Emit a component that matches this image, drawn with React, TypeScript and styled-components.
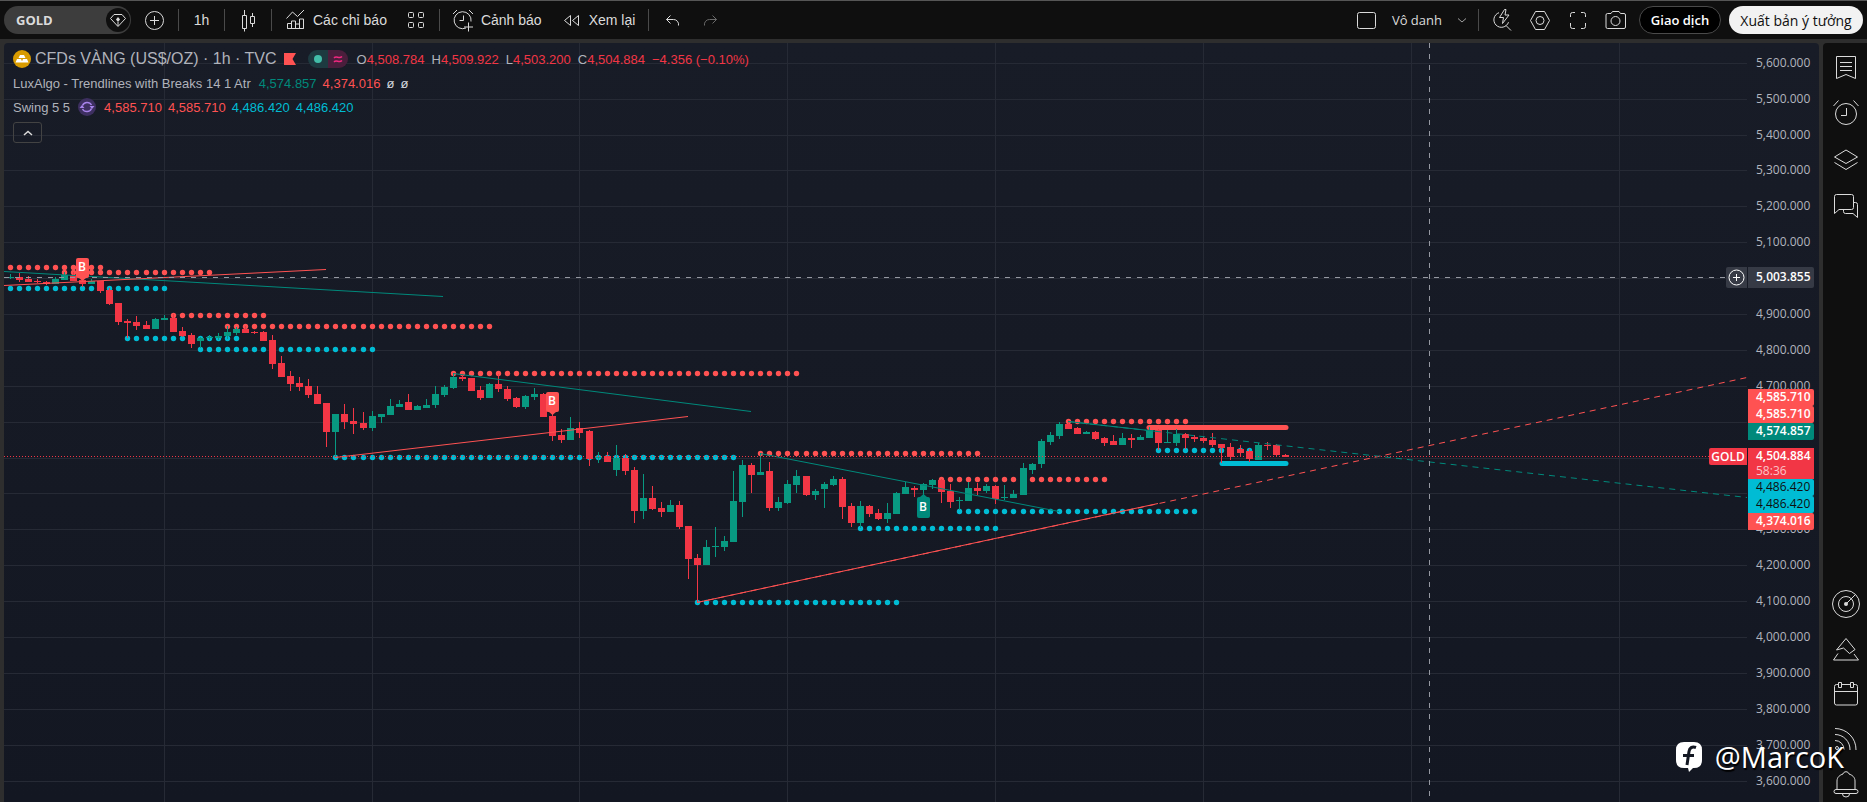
import React from 'react';
import styled, { createGlobalStyle, css } from 'styled-components';

const C = {
  bar: '#0f0f0f',
  frame: '#2e2e2e',
  up: '#089981',
  down: '#f23645',
  high: '#ff5252',
  low: '#00bcd4',
  teal: '#00897b',
  text: '#dbdbdb',
};

const GlobalStyle = createGlobalStyle`
  * { box-sizing: border-box; }
  html, body, #root { height: 100%; }
  body { margin: 0; background: ${C.frame}; overflow: hidden; }
  button { font: inherit; color: inherit; background: none; border: 0; padding: 0; cursor: pointer; }
`;

/* ---------- page frame ---------- */

const Page = styled.div`
  position: relative;
  display: flex;
  flex-direction: column;
  height: 100vh;
  overflow: hidden;
  background: ${C.frame};
  color: ${C.text};
  font-family: 'Liberation Sans', Arial, sans-serif;
  font-size: 14px;
`;

const Toolbar = styled.header`
  display: flex;
  justify-content: space-between;
  flex: none;
  height: 39px;
  padding: 0 4px;
  border-top: 1px solid #565656;
  background: ${C.bar};
`;

const Group = styled.div`
  display: flex;
  align-items: center;
`;

const Cluster = styled.div<{ $gap: number }>`
  display: flex;
  align-items: center;
  gap: ${p => p.$gap}px;
`;

const Separator = styled.span`
  width: 1px;
  height: 22px;
  margin: 0 9px;
  background: #4a4a4a;
`;

const SymbolButton = styled.button`
  display: flex;
  align-items: center;
  justify-content: space-between;
  width: 127px;
  height: 28px;
  margin-right: 10px;
  padding: 0 1px 0 12px;
  border-radius: 14px;
  background: #3d3d3d;
  font: 700 13px 'Open Sans', sans-serif;
`;

const SymbolBadge = styled.span`
  display: flex;
  align-items: center;
  justify-content: center;
  width: 24px;
  height: 24px;
  border-radius: 50%;
  background: ${C.bar};
`;

const IconButton = styled.button<{ $dim?: boolean }>`
  display: flex;
  align-items: center;
  justify-content: center;
  width: 28px;
  height: 28px;
  color: ${p => (p.$dim ? '#6a6a6a' : C.text)};
`;

const IntervalButton = styled.button`
  width: 27px;
  height: 28px;
`;

const LabelButton = styled.button`
  display: flex;
  align-items: center;
  gap: 4px;
  height: 28px;
  padding-right: 4px;
  white-space: nowrap;
`;

const LayoutButton = styled.button`
  display: flex;
  align-items: center;
  gap: 13px;
  height: 28px;
  font: 400 13px 'Open Sans', sans-serif;
`;

const PillButton = styled.button<{ $light?: boolean }>`
  height: 28px;
  border-radius: 14px;
  white-space: nowrap;
  ${p =>
    p.$light
      ? css`
          width: 134px;
          margin-left: 8px;
          background: #f2f2f2;
          color: #0f0f0f;
          font: 400 14px 'Open Sans', sans-serif;
        `
      : css`
          width: 82px;
          margin-left: 9px;
          border: 1px solid #4a4a4a;
          background: #000;
          color: #fff;
          font: 600 13px 'Open Sans', sans-serif;
        `}
`;

const Workspace = styled.div`
  display: flex;
  flex: 1;
  gap: 4px;
  min-height: 0;
  padding: 4px 0 0 4px;
`;

const ChartPanel = styled.main`
  position: relative;
  display: flex;
  flex: 1;
  min-width: 0;
  overflow: hidden;
  border-radius: 4px 4px 0 0;
  background: linear-gradient(#181c27, #131722);
`;

const Plot = styled.svg`
  flex: 1;
  min-width: 0;
  height: 100%;
  font-family: 'Open Sans', sans-serif;
`;

const PriceAxis = styled.aside`
  position: relative;
  flex: none;
  width: 72px;
  font: 400 12px 'Open Sans', sans-serif;
`;

const AxisScale = styled.svg`
  display: block;
  width: 100%;
  height: 100%;
`;

const SideBar = styled.nav`
  display: flex;
  flex-direction: column;
  justify-content: space-between;
  flex: none;
  width: 44px;
  padding: 7px 0 0 2px;
  border-radius: 4px 0 0 0;
  background: ${C.bar};
`;

const SideGroup = styled.div<{ $gap: number }>`
  display: flex;
  flex-direction: column;
  align-items: center;
  gap: ${p => p.$gap}px;
`;

const SideButton = styled.button`
  display: flex;
  align-items: center;
  justify-content: center;
  width: 40px;
  height: 36px;
`;

/* ---------- legend ---------- */

const Legend = styled.section`
  position: absolute;
  top: 4px;
  left: 9px;
  color: #b0b3bb;
  font-size: 13px;
  white-space: nowrap;
`;

const LegendRow = styled.div`
  display: flex;
  align-items: center;
  height: 24px;
`;

const Title = styled.h1`
  margin: 0 7px 0 4px;
  font-size: 16px;
  font-weight: 400;
`;

const StatusPill = styled.span`
  display: flex;
  width: 40px;
  height: 18px;
  margin: 0 9px 0 12px;
  overflow: hidden;
  border-radius: 9px;
`;

const StatusHalf = styled.span<{ $bg: string }>`
  display: flex;
  flex: 1;
  align-items: center;
  justify-content: center;
  background: ${p => p.$bg};
`;

const Values = styled.span<{ $gap: number; $before: number }>`
  display: flex;
  align-items: center;
  gap: ${p => p.$gap}px;
  margin-left: ${p => p.$before}px;
`;

const Value = styled.span<{ $color: string }>`
  color: ${p => p.$color};
`;

const StudyBadge = styled.span`
  display: flex;
  margin-left: 8px;
`;

const CollapseButton = styled.button`
  display: flex;
  align-items: center;
  justify-content: center;
  width: 29px;
  height: 21px;
  margin-top: 3px;
  border: 1px solid #434343;
  border-radius: 3px;
  color: ${C.text};
`;

/* ---------- axis tags ---------- */

const TagStack = styled.div<{ $top: number }>`
  position: absolute;
  top: ${p => p.$top}px;
  left: 1px;
  width: 66px;
`;

const Tag = styled.div<{ $bg: string; $ink?: string; $tall?: boolean }>`
  height: ${p => (p.$tall ? 21 : 17)}px;
  padding-left: 8px;
  border-radius: 0 2px 2px 0;
  background: ${p => p.$bg};
  color: ${p => p.$ink || '#fff'};
  font-weight: ${p => (p.$ink ? 400 : 600)};
  line-height: ${p => (p.$tall ? 20 : 16)}px;
`;

const LastPriceTag = styled.div`
  height: 31px;
  padding-left: 8px;
  background: ${C.down};
  color: #fff;
  font-weight: 600;
  line-height: 16px;
`;

const Countdown = styled.div`
  color: #fbc3c8;
  font-weight: 400;
  line-height: 13px;
`;

const SideTag = styled.div<{ $top: number; $width: number; $height: number; $bg: string }>`
  position: absolute;
  top: ${p => p.$top}px;
  right: 72px;
  display: flex;
  align-items: center;
  justify-content: center;
  width: ${p => p.$width}px;
  height: ${p => p.$height}px;
  border-radius: 2px 0 0 2px;
  background: ${p => p.$bg};
  color: #fff;
  font-weight: 600;
`;

const Watermark = styled.div`
  position: absolute;
  right: 23px;
  bottom: 25px;
  display: flex;
  align-items: center;
  gap: 12px;
  color: #fff;
  font: 400 29px/40px 'Open Sans', sans-serif;
  text-shadow: 1px 2px 1px #000;
  pointer-events: none;
`;

/* ---------- icons ---------- */

const Icon = ({ children, size = 28 }: { children: React.ReactNode; size?: number }) => (
  <svg width={size} height={size} viewBox={`0 0 ${size} ${size}`} fill="none" stroke="currentColor" aria-hidden="true">
    {children}
  </svg>
);

const icons = {
  gem: (
    <Icon size={24}>
      <path d="M8 6.5h8l3.5 4-7.500 8-7.500-8 3.500-4z" strokeLinejoin="round" />
      <path d="M12 9l2 2.500-2 2.500-2-2.500z" fill="currentColor" stroke="none" />
      <path d="M12 14v4" />
    </Icon>
  ),
  plus: (
    <Icon>
      <circle cx="13.500" cy="14.500" r="9" />
      <path d="M13.500 10v9M9 14.500h9" />
    </Icon>
  ),
  candles: (
    <Icon>
      <path d="M8.500 9.500h4v13h-4zM10.500 4v5.500M10.500 22.500v3M16.500 10.500h4v7h-4zM18.500 7v3.500M18.500 17.500v3.500" />
    </Icon>
  ),
  indicators: (
    <Icon>
      <path d="M6.500 22.500v-5h4v5zM10.500 22.500v-7.500h4v7.500M14.500 22.500v-4.500h4v4.500M18.500 22.500v-9.500h4v9.500zM6.500 22.500h16" />
      <path d="M5.500 12.500l6-6.500 5 4.500 6.500-6.500" />
    </Icon>
  ),
  templates: (
    <Icon>
      {[6.5, 16.5].flatMap(x => [6.5, 16.5].map(y => <rect key={`${x}-${y}`} x={x} y={y} width="5" height="5" rx="1" />))}
    </Icon>
  ),
  alert: (
    <Icon>
      <path d="M17 22a8.500 8.500 0 1 1 5-6.500" />
      <path d="M14.500 9.500v5h-4M4 8l4-4M24 8l-4-4M19.500 16.500v9M15 21h9" />
    </Icon>
  ),
  replay: (
    <Icon>
      <path d="M13.500 9.500v10l-6-5zM21.500 9.500v10l-6-5z" strokeLinejoin="round" />
    </Icon>
  ),
  undo: (
    <Icon>
      <path d="M12.500 9.500l-4 4 4 4M8.500 13.500h7a5 5 0 0 1 5 6" />
    </Icon>
  ),
  redo: (
    <Icon>
      <path d="M16.500 9.500l4 4-4 4M20.500 13.500h-7a5 5 0 0 0-5 6" />
    </Icon>
  ),
  layout: (
    <Icon>
      <rect x="4.500" y="6.500" width="18" height="16" rx="2" />
    </Icon>
  ),
  chevron: (
    <Icon size={14}>
      <path d="M3 5.500l4 3.500 4-3.500" stroke="#a0a0a0" />
    </Icon>
  ),
  quickSearch: (
    <Icon>
      <path d="M11 6.700a7.500 7.500 0 1 0 9.500 9.500M18 19.500l5 5" />
      <path d="M16.500 3.500l-5 8h4l-1 6 6.500-8.500h-4l1-5.500z" strokeLinejoin="round" />
    </Icon>
  ),
  settings: (
    <Icon>
      <path d="M9.500 5.500h9l5 9-5 9h-9l-5-9z" strokeLinejoin="round" />
      <circle cx="14" cy="14.500" r="4" />
    </Icon>
  ),
  fullscreen: (
    <Icon>
      <path d="M6.500 11V8.500a2 2 0 0 1 2-2H11M17 6.500h2.500a2 2 0 0 1 2 2V11M21.500 17v3.500a2 2 0 0 1-2 2H17M11 22.500H8.500a2 2 0 0 1-2-2V17" />
    </Icon>
  ),
  camera: (
    <Icon>
      <path d="M5.500 7.500H9l1.500-2h6.500l1.500 2h3.500a1.500 1.500 0 0 1 1.500 1.500v12a1.500 1.500 0 0 1-1.500 1.500h-16.500a1.500 1.500 0 0 1-1.500-1.500v-12a1.500 1.500 0 0 1 1.500-1.500z" />
      <circle cx="13.500" cy="15" r="4.500" />
    </Icon>
  ),
  watchlist: (
    <Icon>
      <path d="M4.500 2.500h19v22l-9.500-4-9.500 4zM8 8.500h12M8 12.500h12M8 16.500h12" />
    </Icon>
  ),
  alarms: (
    <Icon>
      <circle cx="14" cy="14" r="10.500" />
      <path d="M14.500 8v7.500H9M1.500 6l5-5.500M26.500 6l-5-5.500" />
    </Icon>
  ),
  layers: (
    <Icon>
      <path d="M14 4l11.500 7L14 17.500 2.500 11zM2.500 16.500L14 23.500l11.500-7" />
    </Icon>
  ),
  chat: (
    <Icon>
      <path d="M4.500 2.500h15a2 2 0 0 1 2 2v11a2 2 0 0 1-2 2H7l-4.500 4v-17a2 2 0 0 1 2-2z" />
      <path d="M21.500 10.500h2a2 2 0 0 1 2 2v13l-4.500-4h-7.500a2 2 0 0 1-2-2v-2" />
    </Icon>
  ),
  radar: (
    <Icon>
      <circle cx="14" cy="14" r="13.500" />
      <circle cx="14" cy="14" r="7.500" />
      <circle cx="14" cy="14" r="2" fill="currentColor" stroke="none" />
      <path d="M14 14l9.500-9.500" />
    </Icon>
  ),
  ideas: (
    <Icon>
      <path d="M14 3.500l9 11-5.500 4-6-5.500-7 2zM6 18.500l-4.500 6.500h25l-4.500-6" strokeLinejoin="round" />
    </Icon>
  ),
  calendar: (
    <Icon>
      <path d="M6 4.500H4.500a2 2 0 0 0-2 2v16.500a2 2 0 0 0 2 2h19a2 2 0 0 0 2-2V6.500a2 2 0 0 0-2-2H22M9.500 4.500h9M2.500 11.500h23M6.500 2.500h3v5h-3zM18.500 2.500h3v5h-3z" />
    </Icon>
  ),
  stream: (
    <Icon>
      <path d="M3 3.500a21 21 0 0 1 21 21.500M3 9.500a15 15 0 0 1 15 15.500M3 15.500a9 9 0 0 1 9 9.500" />
      <circle cx="5" cy="23" r="1.500" />
    </Icon>
  ),
  bell: (
    <Icon>
      <path d="M5 19.500V11c0-4 3-6 6-7 .500-3 5.500-3 6 0 3 1 6 3 6 7v8.500M4 19.500h20a2 2 0 0 1 0 4H4a2 2 0 0 1 0-4zM10.500 24a3.500 3 0 0 0 7 0" />
    </Icon>
  ),
  collapse: (
    <Icon size={14}>
      <path d="M3 9l4-3.500L11 9" strokeWidth="1.500" />
    </Icon>
  ),
};

/* ---------- chart data ---------- */

type Candle = ['u' | 'd', number, number, number, number];

/* direction, wick top, body top, body bottom, wick bottom */
const candles: Candle[] = [
  ['u', 274, 277, 278, 279], ['d', 273, 277, 280, 282], ['d', 276, 279, 282, 282], ['d', 279, 281, 282, 283],
  ['d', 281, 282, 284, 285], ['u', 277, 279, 284, 284], ['u', 272, 275, 280, 280], ['d', 272, 275, 281, 281],
  ['d', 278, 280, 284, 287], ['u', 279, 281, 284, 284], ['d', 281, 281, 291, 293], ['d', 288, 290, 304, 305],
  ['d', 303, 303, 322, 325], ['d', 319, 321, 323, 338], ['d', 316, 322, 326, 330], ['d', 321, 325, 329, 329],
  ['u', 318, 319, 329, 329], ['u', 315, 318, 320, 320], ['d', 314, 318, 332, 332], ['d', 327, 331, 336, 337],
  ['d', 333, 335, 344, 348], ['u', 337, 338, 341, 348], ['u', 335, 337, 338, 340], ['u', 333, 336, 338, 340],
  ['u', 326, 332, 336, 339], ['u', 327, 329, 333, 335], ['d', 326, 329, 333, 333], ['d', 331, 332, 333, 334],
  ['d', 331, 332, 341, 341], ['d', 335, 340, 364, 369], ['d', 356, 363, 377, 377], ['d', 371, 376, 384, 391],
  ['d', 377, 383, 387, 391], ['d', 379, 386, 395, 398], ['d', 386, 394, 404, 404], ['d', 403, 403, 432, 447],
  ['u', 414, 414, 432, 457], ['d', 404, 414, 422, 429], ['d', 408, 421, 424, 434], ['d', 412, 423, 428, 430],
  ['u', 411, 416, 428, 431], ['u', 414, 414, 417, 423], ['u', 399, 406, 415, 415], ['u', 400, 404, 407, 407],
  ['d', 394, 402, 410, 410], ['u', 405, 406, 410, 410], ['u', 399, 405, 408, 408], ['u', 386, 394, 405, 408],
  ['u', 385, 387, 395, 397], ['u', 373, 377, 388, 389], ['d', 374, 377, 379, 381], ['d', 378, 378, 391, 391],
  ['d', 386, 390, 398, 400], ['u', 383, 384, 398, 398], ['d', 374, 384, 389, 392], ['d', 386, 389, 399, 401],
  ['d', 397, 398, 407, 408], ['u', 395, 396, 407, 409], ['u', 388, 394, 397, 400], ['d', 393, 394, 417, 417],
  ['d', 413, 416, 436, 441], ['d', 429, 435, 440, 443], ['u', 417, 428, 440, 440], ['d', 422, 428, 433, 438],
  ['d', 430, 431, 459, 466], ['u', 452, 457, 458, 463], ['d', 452, 456, 462, 462], ['u', 445, 458, 470, 476],
  ['d', 454, 458, 471, 475], ['d', 467, 470, 511, 523], ['u', 474, 498, 511, 519], ['d', 486, 498, 509, 510],
  ['d', 502, 508, 512, 517], ['u', 500, 505, 512, 512], ['d', 501, 505, 527, 529], ['d', 526, 526, 559, 579],
  ['d', 554, 558, 565, 602], ['u', 540, 547, 565, 565], ['u', 527, 546, 547, 557], ['u', 536, 541, 547, 551],
  ['u', 471, 501, 542, 542], ['u', 460, 465, 502, 517], ['d', 463, 465, 475, 493], ['u', 453, 472, 475, 475],
  ['d', 462, 471, 508, 511], ['u', 497, 502, 508, 511], ['u', 480, 484, 503, 504], ['u', 470, 476, 485, 493],
  ['d', 476, 476, 495, 496], ['u', 489, 491, 495, 500], ['u', 482, 484, 489, 508], ['u', 476, 479, 485, 486],
  ['d', 477, 479, 507, 519], ['d', 503, 506, 523, 527], ['u', 501, 506, 523, 528], ['d', 505, 506, 514, 517],
  ['d', 509, 513, 519, 520], ['u', 503, 513, 519, 523], ['u', 492, 493, 514, 514], ['u', 482, 487, 494, 494],
  ['d', 486, 488, 490, 497], ['u', 483, 484, 490, 496], ['u', 479, 480, 485, 489], ['d', 479, 480, 492, 503],
  ['d', 484, 491, 502, 508], ['u', 497, 500, 501, 510], ['u', 482, 488, 501, 501], ['d', 483, 488, 491, 495],
  ['u', 484, 486, 491, 493], ['d', 485, 486, 499, 504], ['u', 485, 497, 498, 500], ['u', 490, 494, 498, 498],
  ['u', 463, 468, 495, 495], ['u', 463, 464, 470, 474], ['u', 439, 441, 464, 468], ['u', 432, 435, 442, 445],
  ['u', 422, 424, 436, 439], ['d', 420, 424, 429, 429], ['d', 427, 428, 434, 434], ['u', 431, 432, 434, 434],
  ['d', 431, 432, 439, 440], ['d', 437, 438, 443, 446], ['d', 435, 441, 445, 445], ['u', 433, 438, 445, 445],
  ['d', 434, 438, 440, 448], ['u', 435, 437, 440, 440], ['u', 427, 430, 438, 438], ['d', 429, 430, 443, 450],
  ['u', 430, 442, 443, 443], ['u', 429, 434, 443, 446], ['d', 433, 434, 438, 449], ['d', 435, 437, 439, 442],
  ['d', 436, 438, 441, 443], ['d', 433, 440, 445, 447], ['d', 444, 444, 448, 463], ['d', 443, 447, 457, 460],
  ['d', 445, 449, 453, 457], ['d', 449, 451, 459, 462], ['u', 443, 445, 460, 460], ['d', 442, 445, 446, 450],
  ['d', 444, 445, 455, 457], ['d', 454, 455, 457, 457],
];

/* colour, first bar, last bar, level */
const swings: [string, number, number, number][] = [
  [C.high, 0, 10, 267], [C.high, 6, 22, 272], [C.low, 0, 17, 288], [C.high, 18, 28, 315],
  [C.high, 24, 53, 326], [C.low, 13, 25, 338], [C.low, 21, 40, 349], [C.high, 49, 87, 373],
  [C.low, 36, 80, 457], [C.high, 83, 107, 453], [C.low, 76, 98, 602], [C.low, 94, 109, 528],
  [C.high, 103, 121, 479], [C.low, 105, 131, 511], [C.high, 117, 130, 421], [C.low, 127, 137, 450],
];

/* colour, x1, y1, x2, y2, dashed */
const trends: [string, number, number, number, number, boolean][] = [
  [C.teal, 4, 271, 443, 296, false], [C.high, 4, 285, 326, 269, false],
  [C.teal, 453, 373, 751, 411, false], [C.high, 335, 457, 688, 416, false],
  [C.teal, 760, 453, 1059, 511, false], [C.teal, 1068, 421, 1158, 431, false],
  [C.high, 697, 602, 1158, 503, false], [C.high, 697, 602, 1747, 377, true],
  [C.teal, 1068, 421, 1747, 497, true],
];

/* colour, x, y, points up */
const breaks: [string, number, number, boolean][] = [
  [C.high, 76, 258, false], [C.high, 546, 392, false], [C.teal, 917, 497, true],
];

const barX = (i: number) => Math.round(9.9 + 9.0412 * i);
const levels = Array.from({ length: 21 }, (_, k) => ({ price: 5600 - k * 100, y: Math.floor(63.2 + 35.9 * k) }));
/* the crosshair and indicator tags occupy these places on the scale */
const covered = [5000, 4600, 4500, 4400];
const days = Array.from({ length: 8 }, (_, k) => barX(17 + 23 * k));
const fmt = (p: number) => `${Math.floor(p / 1000)},${String(p % 1000).padStart(3, '0')}.000`;

const Chart = () => (
  <Plot role="img" aria-label="GOLD 1h">
    <g transform="translate(-4 -43)">
      {levels.map(l => <rect key={l.price} x="4" y={l.y} width="100%" height="1" fill="#262a35" />)}
      {days.map(x => <rect key={x} x={x} y="43" width="1" height="100%" fill="#262a35" />)}

      {swings.map(([color, from, to, y]) =>
        Array.from({ length: to - from + 1 }, (_, k) => (
          <circle key={`${from}-${y}-${k}`} cx={barX(from + k) + 0.5} cy={y + 0.5} r="2.7" fill={color} />
        )),
      )}
      <path d="M1149 427.500H1286" stroke={C.high} strokeWidth="5" strokeLinecap="round" />
      <path d="M1222 463.500H1286" stroke={C.low} strokeWidth="5" strokeLinecap="round" />

      {candles.map(([dir, top, open, close, bottom], i) => (
        <g key={i} fill={dir === 'u' ? C.up : C.down}>
          <rect x={barX(i)} y={top} width="1" height={bottom - top} />
          <rect x={barX(i) - 3} y={open} width="7" height={close - open} />
        </g>
      ))}

      {trends.map(([color, x1, y1, x2, y2, dashed], i) => (
        <path key={i} d={`M${x1} ${y1 + 0.5}L${x2} ${y2 + 0.5}`} stroke={color} strokeDasharray={dashed ? '6 5' : undefined} />
      ))}

      <path d="M4 456.500H1747" stroke={C.down} strokeDasharray="1 2" />
      <path d="M4 277.500H1730M1429.500 43V1200" stroke="#9598a1" strokeDasharray="5 6" />

      {breaks.map(([color, x, y, up]) => (
        <g key={x}>
          <path d={up ? `M${x + 3} ${y}l3.500-3 3.500 3z` : `M${x + 3} ${y + 20}l3.500 3 3.500-3z`} fill={color} />
          <rect x={x} y={y} width="13" height={up ? 21 : 20} rx="2" fill={color} />
          <text x={x + 6} y={y + (up ? 14 : 13)} fill="#fff" fontSize="12" fontWeight="600" textAnchor="middle">B</text>
        </g>
      ))}
    </g>
  </Plot>
);

const tools: [string, keyof typeof icons][] = [
  ['Tìm kiếm nhanh', 'quickSearch'], ['Cài đặt', 'settings'], ['Toàn màn hình', 'fullscreen'], ['Chụp ảnh', 'camera'],
];
const sideTop: [string, keyof typeof icons][] = [
  ['Danh sách theo dõi', 'watchlist'], ['Cảnh báo', 'alarms'], ['Lớp', 'layers'], ['Trò chuyện', 'chat'],
];
const sideBottom: [string, keyof typeof icons][] = [
  ['Bộ lọc', 'radar'], ['Ý tưởng', 'ideas'], ['Lịch', 'calendar'], ['Luồng', 'stream'], ['Thông báo', 'bell'],
];
const ohlc = [['O', '4,508.784'], ['H', '4,509.922'], ['L', '4,503.200'], ['C', '4,504.884']];

export default function App() {
  return (
    <Page>
      <GlobalStyle />
      <Toolbar>
        <Group>
          <SymbolButton>GOLD<SymbolBadge>{icons.gem}</SymbolBadge></SymbolButton>
          <IconButton aria-label="So sánh">{icons.plus}</IconButton>
          <Separator />
          <IntervalButton>1h</IntervalButton>
          <Separator />
          <IconButton aria-label="Kiểu nến">{icons.candles}</IconButton>
          <Separator />
          <Cluster $gap={11}>
            <LabelButton>{icons.indicators}Các chỉ báo</LabelButton>
            <IconButton aria-label="Mẫu">{icons.templates}</IconButton>
          </Cluster>
          <Separator />
          <Cluster $gap={11}>
            <LabelButton>{icons.alert}Cảnh báo</LabelButton>
            <LabelButton>{icons.replay}Xem lại</LabelButton>
          </Cluster>
          <Separator />
          <Cluster $gap={10}>
            <IconButton aria-label="Hoàn tác">{icons.undo}</IconButton>
            <IconButton aria-label="Làm lại" $dim>{icons.redo}</IconButton>
          </Cluster>
        </Group>
        <Group>
          <Cluster $gap={11}>
            <IconButton aria-label="Bố cục">{icons.layout}</IconButton>
            <LayoutButton>Vô danh{icons.chevron}</LayoutButton>
          </Cluster>
          <Separator />
          <Cluster $gap={10}>
            {tools.map(([label, name]) => <IconButton key={name} aria-label={label}>{icons[name]}</IconButton>)}
          </Cluster>
          <PillButton>Giao dịch</PillButton>
          <PillButton $light>Xuất bản ý tưởng</PillButton>
        </Group>
      </Toolbar>

      <Workspace>
        <ChartPanel>
          <Chart />
          <PriceAxis>
            <AxisScale>
              {levels
                .filter(l => !covered.includes(l.price))
                .map(l => <text key={l.price} x="9" y={l.y - 39} fill="#b2b5be">{fmt(l.price)}</text>)}
            </AxisScale>
            <TagStack $top={224}><Tag $bg="#363a45" $tall>5,003.855</Tag></TagStack>
            <TagStack $top={346}>
              <Tag $bg={C.high}>4,585.710</Tag>
              <Tag $bg={C.high}>4,585.710</Tag>
              <Tag $bg={C.teal}>4,574.857</Tag>
            </TagStack>
            <TagStack $top={405}>
              <LastPriceTag>4,504.884<Countdown>58:36</Countdown></LastPriceTag>
              <Tag $bg={C.low} $ink="#0f0f0f">4,486.420</Tag>
              <Tag $bg={C.low} $ink="#0f0f0f">4,486.420</Tag>
              <Tag $bg={C.high}>4,374.016</Tag>
            </TagStack>
            <SideTag $top={224} $width={21} $height={21} $bg="#363a45">
              <Icon size={19}>
                <circle cx="9.500" cy="9.500" r="7.500" />
                <path d="M9.500 6v7M6 9.500h7" />
              </Icon>
            </SideTag>
            <SideTag $top={405} $width={38} $height={17} $bg={C.down}>GOLD</SideTag>
          </PriceAxis>

          <Legend>
            <LegendRow>
              <svg width="18" height="18" viewBox="0 0 18 18" aria-hidden="true">
                <circle cx="9" cy="9" r="9" fill="#d89b00" />
                <path d="M7 5h4l1.500 3h-7zM4 9h4l1.500 3.500h-7zM10 9h4l1.500 3.500h-7z" fill="#fff" />
              </svg>
              <Title>CFDs VÀNG (US$/OZ) · 1h · TVC</Title>
              <svg width="12" height="12" viewBox="0 0 12 12" aria-hidden="true">
                <path d="M0 0h12L8.500 6 12 12H0z" fill={C.high} />
              </svg>
              <StatusPill>
                <StatusHalf $bg="#1d3a40">
                  <svg width="8" height="8" aria-hidden="true"><circle cx="4" cy="4" r="4" fill="#42bda8" /></svg>
                </StatusHalf>
                <StatusHalf $bg="#4a1e3c">
                  <svg width="10" height="10" fill="none" stroke="#f0287f" strokeWidth="1.500" aria-hidden="true">
                    <path d="M1 4c2.500-3 5 1.500 8-1.500M1 8c2.500-3 5 1.500 8-1.500" />
                  </svg>
                </StatusHalf>
              </StatusPill>
              <Values $gap={7} $before={0}>
                {ohlc.map(([k, v]) => <span key={k}>{k}<Value $color={C.down}>{v}</Value></span>)}
                <Value $color={C.down}>−4.356 (−0.10%)</Value>
              </Values>
            </LegendRow>
            <LegendRow>
              LuxAlgo - Trendlines with Breaks 14 1 Atr
              <Values $gap={6} $before={8}>
                <Value $color={C.teal}>4,574.857</Value>
                <Value $color={C.high}>4,374.016</Value>
                <Value $color="#d1d4dc">ø</Value>
                <Value $color="#d1d4dc">ø</Value>
              </Values>
            </LegendRow>
            <LegendRow>
              Swing 5 5
              <StudyBadge>
                <svg width="18" height="18" viewBox="0 0 18 18" fill="none" stroke="#a783ea" strokeWidth="1.500" aria-hidden="true">
                  <circle cx="9" cy="9" r="9" fill="#3d2f60" stroke="none" />
                  <path d="M4.500 7.500a5 5 0 0 1 9-.500M13.500 10.500a5 5 0 0 1-9 .500" />
                  <path d="M1.500 10h5L4 7zM16.500 8h-5l2.500 3z" fill="#a783ea" stroke="none" />
                </svg>
              </StudyBadge>
              <Values $gap={6} $before={8}>
                <Value $color={C.high}>4,585.710</Value>
                <Value $color={C.high}>4,585.710</Value>
                <Value $color={C.low}>4,486.420</Value>
                <Value $color={C.low}>4,486.420</Value>
              </Values>
            </LegendRow>
            <CollapseButton aria-label="Thu gọn">{icons.collapse}</CollapseButton>
          </Legend>
        </ChartPanel>

        <SideBar>
          <SideGroup $gap={10}>
            {sideTop.map(([label, name]) => <SideButton key={name} aria-label={label}>{icons[name]}</SideButton>)}
          </SideGroup>
          <SideGroup $gap={9}>
            {sideBottom.map(([label, name]) => <SideButton key={name} aria-label={label}>{icons[name]}</SideButton>)}
          </SideGroup>
        </SideBar>
      </Workspace>

      <Watermark>
        <svg width="28" height="32" viewBox="0 0 28 32" aria-hidden="true">
          <path d="M9 1h10q8 0 8 8v10q0 8-8 8h-1l-4 4-1-4H9q-8 0-8-8V9q0-8 8-8z" fill="#fff" />
          <path d="M21 6.500c-4-1.500-6.500 .500-7 4L12 24M8 14.500h11" fill="none" stroke="#131722" strokeWidth="3" />
        </svg>
        @MarcoK
      </Watermark>
    </Page>
  );
}
